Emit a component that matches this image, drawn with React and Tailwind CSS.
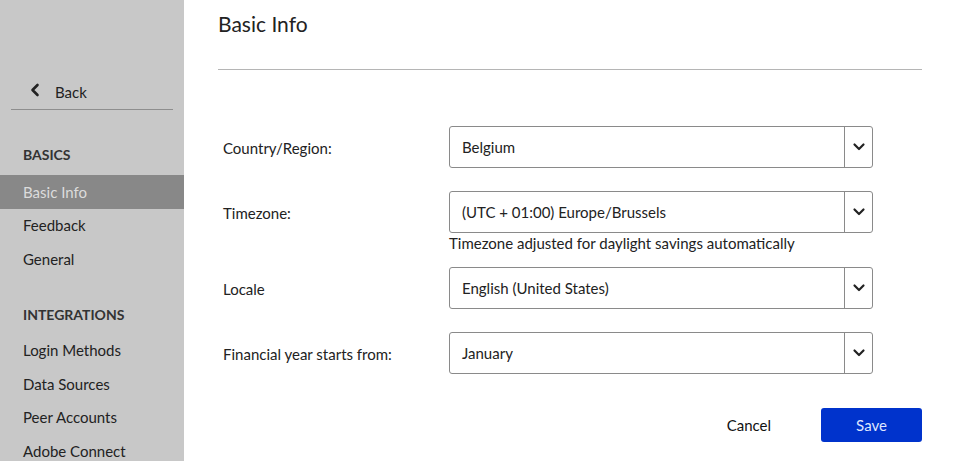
import React from "react";

const Chevron = () => (
  <svg width="14" height="14" viewBox="0 0 14 14" fill="none">
    <path d="M2.5 4.5 L7 9 L11.5 4.5" stroke="#222" strokeWidth="2.2" strokeLinecap="round" strokeLinejoin="round" />
  </svg>
);

const Select = ({ value }) => (
  <div className="flex h-[42px] w-[424px] items-center rounded-[3px] border border-[#8a8a8a] bg-white">
    <div className="flex-1 pl-3 text-[15px] text-[#222]">{value}</div>
    <div className="flex h-full w-[28px] items-center justify-center border-l border-[#8a8a8a]">
      <Chevron />
    </div>
  </div>
);

const Row = ({ label, value, help, className = "" }) => (
  <div className={"flex " + className}>
    <div className="w-[231px] shrink-0 pl-[5px] pt-[11px] text-[15px] text-[#222]">{label}</div>
    <div className="flex flex-col">
      <Select value={value} />
      {help && <div className="text-[15px] leading-[20px] text-[#222]">{help}</div>}
    </div>
  </div>
);

const NavItem = ({ children, active }) => (
  <div
    className={
      "flex h-[33.5px] items-center pl-[23px] text-[15px] " +
      (active ? "bg-[#888888] text-[#dcdcdc]" : "text-[#222]")
    }
  >
    {children}
  </div>
);

export default function App() {
  return (
    <div className="flex h-[461px] w-[955px] overflow-hidden bg-white font-['Lato',sans-serif]">
      {/* Sidebar */}
      <div className="w-[184px] shrink-0 bg-[#c8c8c8]">
        <div className="mx-[11px] mt-[75px] flex h-[35px] items-start border-b border-[#8e8e8e] pl-[18px] pt-[6px]">
          <svg width="12" height="14" viewBox="0 0 12 14" className="mt-[2px]">
            <path d="M8.5 2 L3.5 7 L8.5 12" stroke="#222" strokeWidth="2.6" fill="none" strokeLinecap="round" strokeLinejoin="round" />
          </svg>
          <span className="ml-[14px] text-[15px] text-[#222]">Back</span>
        </div>
        <div className="mt-[35px] pl-[23px] text-[14px] font-bold leading-[20px] text-[#333]">BASICS</div>
        <div className="mt-[10px]">
          <NavItem active>Basic Info</NavItem>
          <NavItem>Feedback</NavItem>
          <NavItem>General</NavItem>
        </div>
        <div className="mt-[29px] pl-[23px] text-[14px] font-bold leading-[20px] text-[#333]">INTEGRATIONS</div>
        <div className="mt-[9px]">
          <NavItem>Login Methods</NavItem>
          <NavItem>Data Sources</NavItem>
          <NavItem>Peer Accounts</NavItem>
          <NavItem>Adobe Connect</NavItem>
        </div>
      </div>

      {/* Main */}
      <div className="flex-1 pl-[34px] pr-[33px]">
        <h1 className="mt-[10px] text-[21px] leading-[28px] text-[#222]">Basic Info</h1>
        <div className="mt-[31px] h-px bg-[#b5b5b5]" />
        <Row className="mt-[56px]" label="Country/Region:" value="Belgium" />
        <Row className="mt-[23px]" label="Timezone:" value="(UTC + 01:00) Europe/Brussels" help="Timezone adjusted for daylight savings automatically" />
        <Row className="mt-[14px]" label="Locale" value="English (United States)" />
        <Row className="mt-[23px]" label="Financial year starts from:" value="January" />
        <div className="mt-[34px] flex items-center justify-end">
          <button className="mr-[50px] text-[15px] text-[#111]">Cancel</button>
          <button className="h-[34px] w-[101px] rounded-[3px] bg-[#0033cc] text-[15px] text-[#dfe6ff]">Save</button>
        </div>
      </div>
    </div>
  );
}
